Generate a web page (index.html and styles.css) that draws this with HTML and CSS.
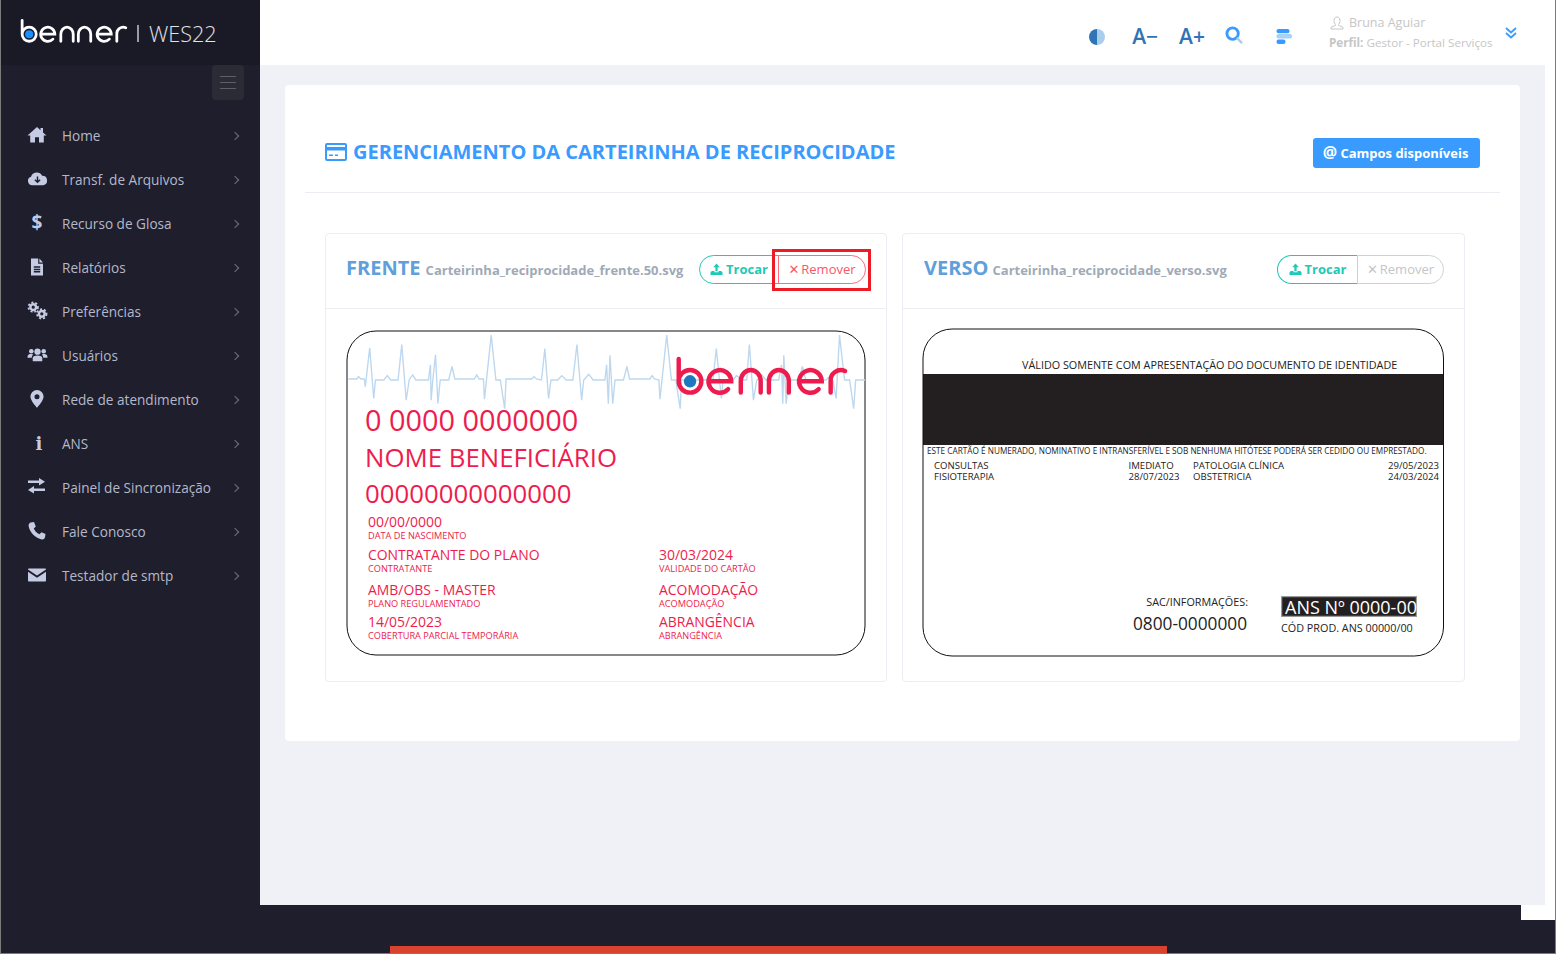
FILE: index.html
```html
<!DOCTYPE html>
<html lang="pt-BR">
<head>
    <meta charset="UTF-8">
    <title>Gerenciamento da carteirinha de reciprocidade</title>
    <link rel="stylesheet" href="styles.css">
</head>
<body>
<div class="window">
    <!-- menu lateral -->
    <aside class="sidebar">
        <div class="brand">
            <svg class="brand-logo" viewBox="995 90 510 120">
                <g class="logo-strokes">
                    <path d="M1005 100V165A33 33 0 1 0 1038 132A33 33 0 0 0 1005 165"/>
                    <path d="M1092 165H1158A33 33 0 1 0 1149 188"/>
                    <path d="M1186 198V165A29 33 0 0 1 1244 165V198"/>
                    <path d="M1268 198V165A29 33 0 0 1 1326 165V198"/>
                    <path d="M1356 165H1422A33 33 0 1 0 1413 188"/>
                    <path d="M1448 198V165A30 30 0 0 1 1490 135"/>
                </g>
                <circle class="logo-dot" cx="1038" cy="165" r="19"/>
            </svg>
            <span class="brand-sep"></span>
            <span class="brand-name">WES22</span>
        </div>
        <div class="toggle-row">
            <button class="menu-toggle"><span></span><span></span><span></span></button>
        </div>
        <nav class="nav">
            <a class="nav-item">
                <svg class="nav-icon" viewBox="0 0 20 20"><path d="M10 2L0.5 10.5H3.2V17.5H8V12.2H12V17.5H16.8V10.5H19.5L16 7.4V3H13.5V5.2Z"/></svg>
                <span class="nav-label">Home</span><i class="chev"></i>
            </a>
            <a class="nav-item">
                <svg class="nav-icon nav-icon-wide" viewBox="0 0 22 20"><path d="M5.5 16.5A4.5 4.5 0 0 1 4.2 7.7A6.3 6.3 0 0 1 15.8 6.6A5 5 0 0 1 17 16.5Z"/><path class="cut" d="M11 7.5V13M8.3 10.8L11 13.5L13.7 10.8"/></svg>
                <span class="nav-label">Transf. de Arquivos</span><i class="chev"></i>
            </a>
            <a class="nav-item">
                <span class="nav-glyph">$</span>
                <span class="nav-label">Recurso de Glosa</span><i class="chev"></i>
            </a>
            <a class="nav-item">
                <svg class="nav-icon" viewBox="0 0 20 20"><path d="M4 1.5H11.2V6.8H16V18.5H4Z"/><path d="M12.4 1.5L16 5.6H12.4Z"/><path class="cut" d="M6.8 10H13.2M6.8 12.4H13.2M6.8 14.8H13.2"/></svg>
                <span class="nav-label">Relatórios</span><i class="chev"></i>
            </a>
            <a class="nav-item">
                <svg class="nav-icon nav-icon-wide" viewBox="0 0 22 20">
                    <circle class="gear" cx="6.5" cy="6" r="3"/><circle class="gear-teeth" cx="6.5" cy="6" r="5"/>
                    <circle class="gear" cx="15.5" cy="13" r="3"/><circle class="gear-teeth" cx="15.5" cy="13" r="5"/>
                </svg>
                <span class="nav-label">Preferências</span><i class="chev"></i>
            </a>
            <a class="nav-item">
                <svg class="nav-icon nav-icon-wide" viewBox="0 0 22 20"><circle cx="4.5" cy="6" r="2.4"/><circle cx="17.5" cy="6" r="2.4"/><circle cx="11" cy="6.5" r="3.3"/><path d="M0.5 13C0.5 9.5 2 9 4.5 9C5.5 9 6 9.2 6.5 9.6C5.5 10.5 5 11.5 5 13Z"/><path d="M21.5 13C21.5 9.5 20 9 17.5 9C16.5 9 16 9.2 15.5 9.6C16.5 10.5 17 11.5 17 13Z"/><path d="M6 16.5V13.5C6 11.3 7.5 10.5 11 10.5C14.5 10.5 16 11.3 16 13.5V16.5Z"/></svg>
                <span class="nav-label">Usuários</span><i class="chev"></i>
            </a>
            <a class="nav-item">
                <svg class="nav-icon" viewBox="0 0 20 20"><path fill-rule="evenodd" d="M10 1A6.6 6.6 0 0 0 3.4 7.6C3.4 12 10 18.8 10 18.8C10 18.8 16.6 12 16.6 7.6A6.6 6.6 0 0 0 10 1ZM10 5.2A2.5 2.5 0 1 1 10 10.2A2.5 2.5 0 1 1 10 5.2Z"/></svg>
                <span class="nav-label">Rede de atendimento</span><i class="chev"></i>
            </a>
            <a class="nav-item">
                <span class="nav-glyph nav-glyph-info">i</span>
                <span class="nav-label">ANS</span><i class="chev"></i>
            </a>
            <a class="nav-item">
                <svg class="nav-icon" viewBox="0 0 20 20"><path d="M12 1L18 4.7L12 8.5V6H1V3.5H12Z"/><path d="M7 9L1 12.9L7 16.5V14H18V11.5H7Z"/></svg>
                <span class="nav-label">Painel de Sincronização</span><i class="chev"></i>
            </a>
            <a class="nav-item">
                <svg class="nav-icon" viewBox="0 0 20 20"><path d="M3.5 1.5L7 1L8.8 5.5L6.8 7.5C7.8 10 10 12.2 12.5 13.2L14.5 11.2L18.5 13L18 16.3C17.5 18.2 15.8 18.8 14 18.3C8.5 17 3 11.5 1.8 6C1.3 4 1.8 2 3.5 1.5Z"/></svg>
                <span class="nav-label">Fale Conosco</span><i class="chev"></i>
            </a>
            <a class="nav-item">
                <svg class="nav-icon" viewBox="0 0 20 20"><path d="M2 3.5H18C18.6 3.5 19 4 19 4.5L10 10.5L1 4.5C1 4 1.4 3.5 2 3.5Z"/><path d="M1 6.8L10 12.8L19 6.8V15.5C19 16 18.6 16.5 18 16.5H2C1.4 16.5 1 16 1 15.5Z"/></svg>
                <span class="nav-label">Testador de smtp</span><i class="chev"></i>
            </a>
        </nav>
    </aside>

    <div class="main">
        <div class="upper">
            <div class="content-col">
                <!-- barra superior -->
                <header class="topbar">
                    <svg class="tool-contrast" viewBox="0 0 18 18"><path class="half-dark" d="M9 1A8 8 0 0 0 9 17Z"/><path class="half-light" d="M9 1A8 8 0 0 1 9 17Z"/></svg>
                    <span class="tool-font tool-minus">A−</span>
                    <span class="tool-font tool-plus">A+</span>
                    <svg class="tool-search" viewBox="0 0 20 20"><circle cx="8" cy="8" r="6"/><path d="M12.5 12.5L18 18"/></svg>
                    <svg class="tool-align" viewBox="0 0 16 16"><rect class="bar-blue" x="0.5" y="0" width="13" height="4.2" rx="2"/><rect class="bar-light" x="0.5" y="5" width="15.5" height="4.5" rx="2"/><rect class="bar-blue" x="0.5" y="10.5" width="9" height="4.5" rx="2"/></svg>
                    <div class="user-box">
                        <div class="user-name">
                            <svg class="user-icon" viewBox="0 0 14 14"><path d="M7 1C5 1 4 2.5 4 4.5C4 6.5 5 7.8 5.5 8.5V9.3L1 11.3V13H13V11.3L8.5 9.3V8.5C9 7.8 10 6.5 10 4.5C10 2.5 9 1 7 1Z"/></svg>
                            Bruna Aguiar
                        </div>
                        <div class="user-profile"><b>Perfil:</b> Gestor - Portal Serviços</div>
                    </div>
                    <svg class="user-chevrons" viewBox="0 0 12 12"><path d="M1 1L6 5.5L11 1M1 6L6 10.5L11 6"/></svg>
                </header>

                <main class="content">
                    <section class="card">
                        <div class="card-head">
                            <h1 class="card-title">
                                <svg class="title-icon" viewBox="0 0 22 18"><path fill-rule="evenodd" d="M2 0H20A2 2 0 0 1 22 2V16A2 2 0 0 1 20 18H2A2 2 0 0 1 0 16V2A2 2 0 0 1 2 0ZM2 2V4H20V2ZM2 7.5V16H20V7.5ZM4 11.5H8V13H4ZM10 11.5H13V13H10Z"/></svg>
                                GERENCIAMENTO DA CARTEIRINHA DE RECIPROCIDADE
                            </h1>
                            <button class="btn-fields"><span class="at">@</span> Campos disponíveis</button>
                        </div>

                        <div class="panels">
                            <!-- frente -->
                            <div class="panel">
                                <div class="panel-head">
                                    <div class="panel-title"><strong>FRENTE</strong> <span>Carteirinha_reciprocidade_frente.50.svg</span></div>
                                    <div class="btn-group">
                                        <button class="btn-swap">
                                            <svg class="swap-icon" viewBox="0 0 14 14"><path d="M7 0.5L10.5 4.5H8.2V9H5.8V4.5H3.5Z"/><path d="M2.5 8.5H4.8V10H9.2V8.5H11.5C12.8 8.5 13.5 9.5 13.5 11V13H0.5V11C0.5 9.5 1.2 8.5 2.5 8.5Z"/></svg>
                                            Trocar
                                        </button>
                                        <div class="remove-wrap">
                                            <button class="btn-remove"><span class="x">✕</span> Remover</button>
                                            <span class="highlight"></span>
                                        </div>
                                    </div>
                                </div>
                                <div class="panel-body">
                                    <svg class="id-card" width="520" height="326" viewBox="0 0 520 326">
                                        <rect class="card-edge" x="1" y="1" width="518" height="324" rx="29"/>
                                        <g transform="translate(-6 -5.7) scale(.3375)">
                                            <polyline class="ecg" points="25,162 50,162 55,155 62,162 72,162 75,185 88,70 100,220 105,165 130,165 140,152 150,165 172,165 183,60 196,225 205,165 215,150 225,165 262,165 268,120 270,225 275,165 283,90 290,235 297,165 322,165 332,125 340,162 398,162 405,150 412,162 425,162 428,222 448,32 462,165 475,165 488,250 492,162 568,162 575,155 582,162 597,165 607,72 618,220 625,165 645,165 657,152 670,165 690,165 702,60 716,225 722,165 737,148 750,165 785,165 790,120 795,235 800,92 808,235 815,165 840,165 850,125 858,162 918,162 925,152 932,162 945,165 948,222 968,32 982,165 995,165 1008,250 1012,165 1085,165 1095,155 1105,165 1115,72 1130,220 1135,165 1165,165 1175,152 1190,165 1205,165 1213,60 1225,225 1235,165 1250,150 1262,165 1300,165 1308,120 1312,235 1315,92 1322,235 1330,165 1360,165 1370,125 1380,165 1440,165 1450,155 1460,165 1470,220 1480,32 1495,165 1510,165 1522,250 1528,165 1556,165"/>
                                        </g>
                                        <g transform="translate(-12 -5.3) scale(.343)">
                                            <g class="logo-red">
                                                <path d="M1005 100V165A33 33 0 1 0 1038 132A33 33 0 0 0 1005 165"/>
                                                <path d="M1092 165H1158A33 33 0 1 0 1149 188"/>
                                                <path d="M1186 198V165A29 33 0 0 1 1244 165V198"/>
                                                <path d="M1268 198V165A29 33 0 0 1 1326 165V198"/>
                                                <path d="M1356 165H1422A33 33 0 1 0 1413 188"/>
                                                <path d="M1448 198V165A30 30 0 0 1 1490 135"/>
                                            </g>
                                            <circle class="logo-dot-card" cx="1038" cy="165" r="18"/>
                                        </g>
                                        <g class="front-text">
                                            <text class="f-xl" x="19" y="101">0 0000 0000000</text>
                                            <text class="f-lg" x="19" y="137">NOME BENEFICIÁRIO</text>
                                            <text class="f-lg" x="19" y="173">00000000000000</text>
                                            <text class="f-md" x="22" y="197">00/00/0000</text>
                                            <text class="f-sm" x="22" y="209">DATA DE NASCIMENTO</text>
                                            <text class="f-md" x="22" y="230">CONTRATANTE DO PLANO</text>
                                            <text class="f-sm" x="22" y="242">CONTRATANTE</text>
                                            <text class="f-md" x="22" y="265">AMB/OBS - MASTER</text>
                                            <text class="f-sm" x="22" y="277">PLANO REGULAMENTADO</text>
                                            <text class="f-md" x="22" y="297">14/05/2023</text>
                                            <text class="f-sm" x="22" y="309">COBERTURA PARCIAL TEMPORÁRIA</text>
                                            <text class="f-md" x="313" y="230">30/03/2024</text>
                                            <text class="f-sm" x="313" y="242">VALIDADE DO CARTÃO</text>
                                            <text class="f-md" x="313" y="265">ACOMODAÇÃO</text>
                                            <text class="f-sm" x="313" y="277">ACOMODAÇÃO</text>
                                            <text class="f-md" x="313" y="297">ABRANGÊNCIA</text>
                                            <text class="f-sm" x="313" y="309">ABRANGÊNCIA</text>
                                        </g>
                                    </svg>
                                </div>
                            </div>

                            <!-- verso -->
                            <div class="panel panel-back">
                                <div class="panel-head">
                                    <div class="panel-title"><strong>VERSO</strong> <span>Carteirinha_reciprocidade_verso.svg</span></div>
                                    <div class="btn-group">
                                        <button class="btn-swap">
                                            <svg class="swap-icon" viewBox="0 0 14 14"><path d="M7 0.5L10.5 4.5H8.2V9H5.8V4.5H3.5Z"/><path d="M2.5 8.5H4.8V10H9.2V8.5H11.5C12.8 8.5 13.5 9.5 13.5 11V13H0.5V11C0.5 9.5 1.2 8.5 2.5 8.5Z"/></svg>
                                            Trocar
                                        </button>
                                        <button class="btn-remove is-disabled"><span class="x">✕</span> Remover</button>
                                    </div>
                                </div>
                                <div class="panel-body">
                                    <svg class="id-card" width="523" height="329" viewBox="0 0 523 329">
                                        <rect class="stripe" x="1" y="46" width="521" height="71"/>
                                        <rect class="card-edge" x="1" y="1" width="520.5" height="327" rx="29"/>
                                        <g class="back-text">
                                            <text class="b-md" x="100" y="41">VÁLIDO SOMENTE COM APRESENTAÇÃO DO DOCUMENTO DE IDENTIDADE</text>
                                            <text class="b-xs" x="5" y="126">ESTE CARTÃO É NUMERADO, NOMINATIVO E INTRANSFERÍVEL E SOB NENHUMA HITÓTESE PODERÁ SER CEDIDO OU EMPRESTADO.</text>
                                            <text class="b-sm" x="12" y="141">CONSULTAS</text>
                                            <text class="b-sm" x="12" y="152">FISIOTERAPIA</text>
                                            <text class="b-sm" x="206.5" y="141">IMEDIATO</text>
                                            <text class="b-sm" x="206.5" y="152">28/07/2023</text>
                                            <text class="b-sm" x="271" y="141">PATOLOGIA CLÍNICA</text>
                                            <text class="b-sm" x="271" y="152">OBSTETRICIA</text>
                                            <text class="b-sm b-end" x="517" y="141">29/05/2023</text>
                                            <text class="b-sm b-end" x="517" y="152">24/03/2024</text>
                                            <text class="b-md b-end" x="326" y="278">SAC/INFORMAÇÕES:</text>
                                            <text class="b-phone b-end" x="325" y="302">0800-0000000</text>
                                            <text class="b-md" x="359" y="304">CÓD PROD. ANS 00000/00</text>
                                        </g>
                                        <svg class="ans-box" x="359" y="268" width="136" height="21" viewBox="0 0 136 21">
                                            <rect x="0.5" y="0.5" width="135" height="20"/>
                                            <text x="4" y="17.5">ANS Nº 0000-00</text>
                                        </svg>
                                    </svg>
                                </div>
                            </div>
                        </div>
                    </section>
                </main>
            </div>
        </div>
        <div class="strip"><span class="strip-white"></span></div>
        <div class="red-bar"></div>
    </div>
</div>
</body>
</html>
```

FILE: styles.css
```css
* {
    box-sizing: border-box;
}
html, body {
    margin: 0;
    height: 100%;
    overflow: hidden;
}
body {
    font-family: "Open Sans", "Liberation Sans", sans-serif;
    background: #1e1e2d;
}
button {
    font-family: inherit;
}
.window {
    display: flex;
    height: 954px;
    width: 1556px;
    background: #1e1e2d;
    border-left: 1px solid #7b7b7b;
    border-right: 1px solid #7b7b7b;
    border-bottom: 1px solid #7b7b7b;
}

/* sidebar */
.sidebar {
    width: 259px;
    flex: none;
    display: flex;
    flex-direction: column;
}
.brand {
    height: 65px;
    background: #1a1a27;
    display: flex;
    align-items: center;
    padding-left: 19px;
    flex: none;
}
.brand-logo {
    width: 109px;
    height: 26px;
    margin-top: -4px;
}
.logo-strokes path {
    fill: none;
    stroke: #fff;
    stroke-width: 13;
    stroke-linecap: round;
}
.logo-dot {
    fill: #1b8fff;
}
.brand-sep {
    width: 2px;
    height: 17px;
    background: #9a9aa5;
    margin: 2px 10px 0 8px;
}
.brand-name {
    font-size: 21.6px;
    font-weight: 300;
    color: #e4e4e8;
    margin-top: 1px;
}
.toggle-row {
    display: flex;
    justify-content: flex-end;
    padding-right: 16px;
}
.menu-toggle {
    width: 32px;
    height: 35px;
    background: #2b2b35;
    border: 0;
    border-radius: 4px;
    display: flex;
    flex-direction: column;
    align-items: center;
    justify-content: center;
    gap: 5px;
    padding: 0;
}
.menu-toggle span {
    display: block;
    width: 16px;
    height: 1px;
    background: #5e5e68;
}
.nav {
    margin-top: 14px;
}
.nav-item {
    height: 44px;
    display: flex;
    align-items: center;
    padding-left: 26px;
    padding-right: 20px;
    color: #b5b8c9;
    font-size: 13.6px;
}
.nav-icon {
    width: 20px;
    height: 20px;
    flex: none;
    fill: #c5cbe2;
    margin-right: 15px;
    margin-top: -3px;
}
.nav-icon .cut {
    fill: none;
    stroke: #1e1e2d;
    stroke-width: 1.5;
}
.nav-icon-wide {
    width: 21px;
}
.nav-icon-wide + .nav-label {
    margin-left: -1px;
}
.nav-glyph {
    width: 20px;
    flex: none;
    margin-right: 15px;
    margin-top: -4px;
    text-align: center;
    font-weight: 700;
    font-size: 19px;
    line-height: 20px;
    color: #c5cbe2;
}
.nav-glyph-info {
    font-family: "DejaVu Serif", serif;
    font-size: 18px;
    padding-left: 4px;
    margin-top: 0;
}
.gear {
    fill: none;
    stroke: #c5cbe2;
    stroke-width: 2.6;
}
.gear-teeth {
    fill: none;
    stroke: #c5cbe2;
    stroke-width: 1.8;
    stroke-dasharray: 2.2 2;
}
.nav-label {
    flex: 1;
    white-space: nowrap;
    margin-top: -2px;
}
.chev {
    display: block;
    width: 6px;
    height: 6px;
    border-top: 1.5px solid #6f7180;
    border-right: 1.5px solid #6f7180;
    transform: rotate(45deg);
    margin-top: -1px;
    margin-right: 2px;
}

/* main area */
.main {
    width: 1295px;
    flex: none;
    display: flex;
    flex-direction: column;
}
.upper {
    height: 905px;
    background: #fff;
    padding-right: 10px;
    flex: none;
}
.content-col {
    height: 100%;
    background: #f0f1f7;
    display: flex;
    flex-direction: column;
}
.strip {
    height: 15px;
    display: flex;
    justify-content: flex-end;
    flex: none;
}
.strip-white {
    width: 34px;
    background: #fff;
}
.red-bar {
    width: 777px;
    height: 7px;
    background: #d8432f;
    margin-left: 130px;
    margin-top: 26px;
    flex: none;
}

/* top bar */
.topbar {
    height: 65px;
    flex: none;
    background: #fff;
    display: flex;
    align-items: center;
    padding-right: 28px;
    justify-content: flex-end;
}
.tool-contrast {
    width: 18px;
    height: 18px;
    margin-right: 26px;
    margin-top: 8px;
}
.half-dark {
    fill: #2f74b5;
}
.half-light {
    fill: #a9cdec;
}
.tool-font {
    font-size: 21px;
    font-weight: 600;
    color: #2f74b5;
    line-height: 1;
    margin-top: 8px;
}
.tool-minus {
    margin-right: 21px;
}
.tool-plus {
    margin-right: 20px;
}
.tool-search {
    width: 19px;
    height: 19px;
    fill: none;
    margin-right: 32px;
    margin-top: 6px;
}
.tool-search circle {
    stroke: #3a9bff;
    stroke-width: 3;
}
.tool-search path {
    stroke: #a9cdec;
    stroke-width: 2.5;
}
.tool-align {
    width: 16px;
    height: 16px;
    margin-right: 37px;
    margin-top: 8px;
}
.bar-blue {
    fill: #3a9bff;
}
.bar-light {
    fill: #a9d0f5;
}
.user-box {
    width: 164px;
    margin-right: 12px;
    color: #c6c6c6;
    font-size: 11.65px;
    line-height: 21px;
    white-space: nowrap;
}
.user-name {
    display: flex;
    align-items: center;
    gap: 5px;
    font-size: 12.5px;
}
.user-profile {
    margin-top: -1px;
}
.user-icon {
    width: 14px;
    height: 14px;
    fill: none;
    stroke: #c6c6c6;
    margin-left: 1px;
}
.user-chevrons {
    width: 12px;
    height: 12px;
    fill: none;
    stroke: #3a9bff;
    stroke-width: 1.8;
}

/* card */
.content {
    flex: 1;
    padding: 20px 25px 0;
}
.card {
    background: #fff;
    border-radius: 4px;
    height: 656px;
    padding: 0 20px;
}
.card-head {
    height: 108px;
    border-bottom: 1px solid #ebedf2;
    display: flex;
    align-items: center;
    justify-content: space-between;
    padding: 29px 20px 0 20px;
}
.card-title {
    margin: -3px 0 0;
    font-size: 20px;
    font-weight: 700;
    color: #3a9bff;
    display: flex;
    align-items: center;
    gap: 6px;
    white-space: nowrap;
}
.title-icon {
    width: 22px;
    height: 18px;
    fill: #3a9bff;
}
.btn-fields {
    width: 167px;
    height: 30px;
    background: #3a9bff;
    color: #fff;
    border: 0;
    border-radius: 3px;
    font-size: 13px;
    font-weight: 700;
    padding: 0 2px 2px 0;
    margin-top: -1px;
}
.btn-fields .at {
    font-size: 16px;
}

/* panels */
.panels {
    display: flex;
    gap: 15px;
    margin: 40px 0 0 20px;
}
.panel {
    width: 562px;
    height: 449px;
    border: 1px solid #ebedf2;
    border-radius: 4px;
}
.panel-back {
    width: 563px;
}
.panel-head {
    height: 75px;
    border-bottom: 1px solid #ebedf2;
    display: flex;
    align-items: center;
    justify-content: space-between;
    padding: 0 20px 8px 20px;
}
.panel-back .panel-head {
    padding-left: 21px;
}
.panel-title {
    white-space: nowrap;
}
.panel-title strong {
    font-size: 20px;
    color: #5f9fdb;
}
.panel-title span {
    font-size: 13px;
    font-weight: 700;
    color: #9faab6;
    margin-left: 1px;
}
.panel-back .panel-title span {
    margin-left: 0;
}
.btn-group {
    display: flex;
    margin-top: 4px;
}
.btn-swap, .btn-remove {
    height: 29px;
    background: #fff;
    font-size: 13px;
    padding: 0;
    display: flex;
    align-items: center;
    justify-content: center;
    white-space: nowrap;
}
.btn-swap {
    width: 80px;
    border: 1px solid #1dc9b7;
    border-radius: 15px 0 0 15px;
    color: #1dc9b7;
    font-weight: 700;
    gap: 3px;
}
.panel-back .btn-swap {
    border-right: 0;
}
.swap-icon {
    width: 13px;
    height: 13px;
    fill: #1dc9b7;
}
.btn-remove {
    width: 88px;
    border: 1px solid #fd6a7b;
    border-radius: 0 15px 15px 0;
    color: #f8566a;
    gap: 2px;
}
.btn-remove .x {
    font-family: "DejaVu Sans", sans-serif;
    font-size: 13px;
}
.is-disabled {
    width: 87px;
    border-color: #cfd2d4;
    color: #c4c6c8;
}
.remove-wrap {
    position: relative;
    margin-left: -1px;
}
.highlight {
    position: absolute;
    top: -6px;
    left: -6px;
    right: -5px;
    bottom: -7px;
    border: 3px solid #ed1c24;
}
.panel-body {
    padding: 21px 20px 0;
}
.panel-back .panel-body {
    padding: 19px 19px 0;
}
.id-card {
    display: block;
}
.card-edge {
    fill: none;
    stroke: #111;
    stroke-width: 1;
}
.stripe {
    fill: #231f20;
}
.ecg {
    fill: none;
    stroke: #bcd7ee;
    stroke-width: 4;
}
.logo-red path {
    fill: none;
    stroke: #ee1c4e;
    stroke-width: 13;
    stroke-linecap: round;
}
.logo-dot-card {
    fill: #1e78bd;
}
.front-text {
    fill: #ee1c4e;
}
.f-xl {
    font-size: 28.9px;
}
.f-lg {
    font-size: 25.8px;
}
.f-md {
    font-size: 13.95px;
}
.f-sm {
    font-size: 9.2px;
}
.back-text {
    fill: #222;
}
.b-md {
    font-size: 10.8px;
}
.b-xs {
    font-size: 8.23px;
}
.b-sm {
    font-size: 9.6px;
}
.b-end {
    text-anchor: end;
}
.b-phone {
    font-size: 17.25px;
}
.ans-box rect {
    fill: #231f20;
    stroke: #999;
    stroke-width: 1.5;
}
.ans-box text {
    fill: #fff;
    font-size: 18px;
}
```
